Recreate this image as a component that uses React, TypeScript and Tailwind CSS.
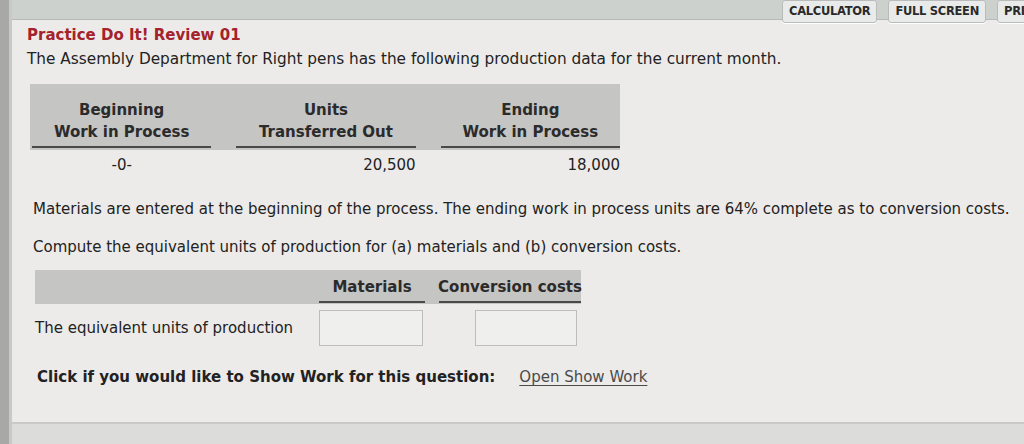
import React from "react";

const font = { fontFamily: '"DejaVu Sans", Verdana, sans-serif' };

function ToolButton({ label }: { label: string }) {
  return (
    <button className="h-[23px] px-[6px] rounded-[3px] border border-[#b9bcba] bg-[#e9ebea] text-[11.5px] font-bold text-[#2a2a2a] tracking-tight shadow-[0_1px_0_#ffffff] whitespace-nowrap">
      {label}
    </button>
  );
}

function HeaderCell({ top, bottom }: { top: string; bottom: string }) {
  return (
    <div className="w-[180px] flex flex-col items-center justify-end">
      <div className="leading-[22px]">{top}</div>
      <div className="leading-[22px]">{bottom}</div>
      <div className="mt-[3px] h-[2px] w-full bg-[#4a4a4a]" />
    </div>
  );
}

export default function App() {
  return (
    <div
      className="w-[1024px] h-[444px] flex bg-[#d9dad8] overflow-hidden text-[#222]"
      style={font}
    >
      <div className="w-[12px] h-full bg-[#a8a9a7] border-r-[3px] border-[#c9cac8]" />
      <div className="flex-1 flex flex-col">
        {/* toolbar */}
        <div className="h-[20px] bg-[#cdd1ce] border-b border-[#b7bab8] relative">
          <div className="absolute left-[770px] top-[0px] flex gap-[11px]">
            <ToolButton label="CALCULATOR" />
            <ToolButton label="FULL SCREEN" />
            <ToolButton label="PRINT" />
          </div>
        </div>

        {/* panel */}
        <div className="h-[404px] bg-[#ecebe9] border-b-2 border-[#c9cac8] pl-[15px] pr-[8px] pt-[4px]">
          <h1 className="text-[15px] font-bold text-[#a3222c] leading-[22px]">
            Practice Do It! Review 01
          </h1>
          <p className="text-[15.3px] leading-[22px] mt-[2px]">
            The Assembly Department for Right pens has the following production data for the current month.
          </p>

          {/* table 1 */}
          <div className="mt-[14px] ml-[3px] w-[590px]">
            <div className="bg-[#c5c5c4] h-[66px] flex items-end gap-[25px] pl-[2px] pb-[2px] text-[15px] font-bold text-[#2b2b2b]">
              <HeaderCell top="Beginning" bottom="Work in Process" />
              <HeaderCell top="Units" bottom="Transferred Out" />
              <HeaderCell top="Ending" bottom="Work in Process" />
            </div>
            <div className="flex gap-[25px] pl-[2px] text-[15px] leading-[22px] pt-[4px]">
              <div className="w-[180px] text-center">-0-</div>
              <div className="w-[180px] text-right">20,500</div>
              <div className="w-[180px] text-right">18,000</div>
            </div>
          </div>

          <p className="text-[15px] leading-[22px] mt-[22px] ml-[6px]">
            Materials are entered at the beginning of the process. The ending work in process units are 64% complete as to conversion costs.
          </p>
          <p className="text-[15px] leading-[22px] mt-[16px] ml-[6px]">
            Compute the equivalent units of production for (a) materials and (b) conversion costs.
          </p>

          {/* table 2 */}
          <div className="mt-[12px] ml-[8px] w-[546px]">
            <div className="bg-[#c5c5c4] h-[34px] flex items-end text-[15px] font-bold text-[#2b2b2b] pb-[1px]">
              <div className="w-[284px]" />
              <div className="w-[106px] flex flex-col items-center">
                <div className="leading-[22px]">Materials</div>
                <div className="mt-[3px] h-[2px] w-full bg-[#4a4a4a]" />
              </div>
              <div className="w-[14px]" />
              <div className="w-[142px] flex flex-col items-center">
                <div className="leading-[22px] whitespace-nowrap">Conversion costs</div>
                <div className="mt-[3px] h-[2px] w-full bg-[#4a4a4a]" />
              </div>
            </div>
            <div className="flex items-center pt-[6px] text-[15px]">
              <div className="w-[284px] leading-[22px]">The equivalent units of production</div>
              <div className="w-[104px] h-[36px] border border-[#bdbdbd] bg-[#efefed]" />
              <div className="w-[52px]" />
              <div className="w-[102px] h-[36px] border border-[#bdbdbd] bg-[#efefed]" />
            </div>
          </div>

          <div className="mt-[20px] ml-[10px] flex items-center text-[15px] leading-[22px]">
            <span className="font-bold">Click if you would like to Show Work for this question:</span>
            <a href="#" className="ml-[24px] text-[#4a4a4a] underline underline-offset-[3px]">
              Open Show Work
            </a>
          </div>
        </div>
        <div className="flex-1 bg-[#dcdcda]" />
      </div>
    </div>
  );
}
